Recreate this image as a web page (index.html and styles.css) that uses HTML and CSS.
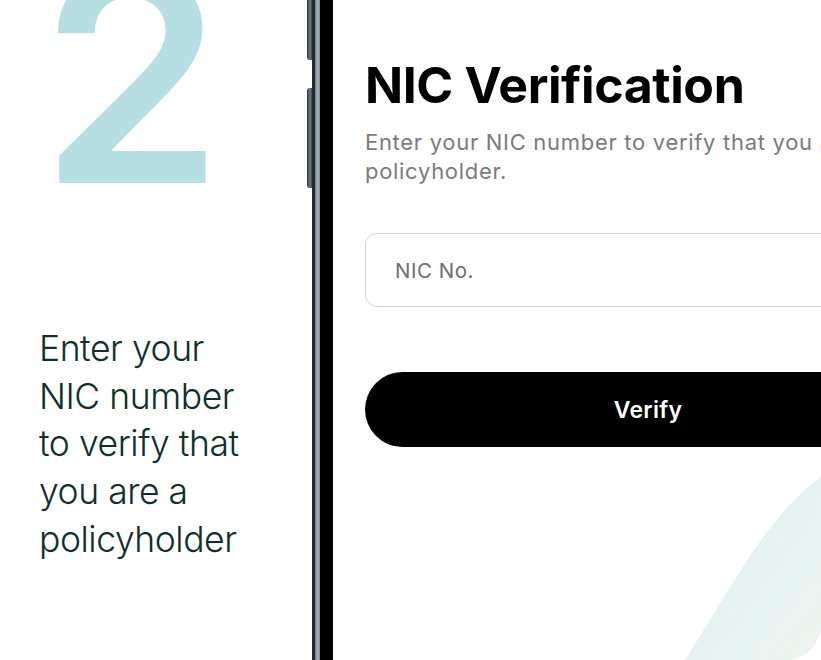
FILE: index.html
```html
<!DOCTYPE html>
<html lang="en">

<head>
    <meta charset="UTF-8">
    <meta name="viewport" content="width=device-width, initial-scale=1.0">
    <title>NIC Verification</title>
    <link rel="stylesheet" href="styles.css">
</head>

<body>
    <section class="intro">
        <div class="step-number">2</div>
        <p class="step-text">Enter your<br>NIC number<br>to verify that<br>you are a<br>policyholder</p>
    </section>

    <section class="phone">
        <div class="side-keys">
            <span class="key key-top"></span>
            <span class="key key-volume"></span>
        </div>
        <div class="bezel-outer"></div>
        <div class="bezel-rim"></div>
        <div class="bezel-inner"></div>

        <div class="screen">
            <h1>NIC Verification</h1>
            <p class="subtitle">Enter your NIC number to verify that you are a policyholder.</p>
            <form id="nicForm">
                <input type="text" id="nicInput" name="nic" placeholder="NIC No.">
                <button type="submit">Verify</button>
            </form>

            <svg class="wave" width="140" height="190" viewBox="0 0 140 190">
                <defs>
                    <linearGradient id="waveFill" x1="0" y1="0" x2="1" y2="1">
                        <stop offset="0" stop-color="#dcf0f4" />
                        <stop offset="1" stop-color="#eef4ef" />
                    </linearGradient>
                    <pattern id="waveLines" width="6" height="6" patternUnits="userSpaceOnUse" patternTransform="rotate(30)">
                        <line x1="0" y1="0" x2="0" y2="6" stroke="#ffffff" stroke-opacity="0.25" stroke-width="1" />
                    </pattern>
                </defs>
                <path d="M0 185 C 45 115, 85 35, 139 0 L 139 130 C 139 165, 125 185, 100 185 Z" fill="url(#waveFill)" />
                <path d="M0 185 C 45 115, 85 35, 139 0 L 139 130 C 139 165, 125 185, 100 185 Z" fill="url(#waveLines)" />
            </svg>
        </div>
    </section>
</body>

</html>
```

FILE: styles.css
```css
body {
    margin: 0;
    width: 821px;
    height: 660px;
    overflow: hidden;
    display: flex;
    background: #ffffff;
    font-family: Inter, "Noto Sans", sans-serif;
}

.intro {
    width: 307px;
    flex: none;
    padding-left: 39px;
    box-sizing: border-box;
}

.step-number {
    font-size: 294px;
    font-weight: 600;
    line-height: 200px;
    height: 200px;
    margin-top: -24px;
    margin-left: 1px;
    letter-spacing: -4px;
    color: #b7dfe3;
}

.step-text {
    margin: 149px 0 0;
    font-size: 35.5px;
    font-weight: 300;
    line-height: 47.7px;
    letter-spacing: -0.45px;
    color: #0f2e2c;
}

.phone {
    display: flex;
    flex: none;
    height: 660px;
}

.side-keys {
    width: 5px;
    display: flex;
    flex-direction: column;
    gap: 28px;
}

.key {
    display: block;
    background: linear-gradient(90deg, #2c3439, #6f7c86 60%, #3a434a);
    border-radius: 3px 0 0 3px;
}

.key-top {
    height: 70px;
    margin-top: -10px;
}

.key-volume {
    height: 100px;
}

.bezel-outer {
    width: 3px;
    background: #232a2e;
}

.bezel-rim {
    width: 5px;
    background: linear-gradient(90deg, #6d7a84, #a4b1ba 50%, #7d8a93);
}

.bezel-inner {
    width: 13px;
    background: #000000;
}

.screen {
    position: relative;
    width: 566px;
    flex: none;
    padding: 0 32px;
    background: #ffffff;
}

h1 {
    margin: 55px 0 0;
    font-size: 50px;
    font-weight: 700;
    line-height: 60px;
    letter-spacing: -0.4px;
    color: #000000;
}

.subtitle {
    margin: 13px 0 0;
    font-size: 22px;
    line-height: 29px;
    letter-spacing: 0.7px;
    color: #7b7b7b;
}

form {
    display: flex;
    flex-direction: column;
    gap: 65px;
    margin-top: 47px;
}

input[type="text"] {
    height: 74px;
    padding: 0 29px;
    border: 1.5px solid #d2d2d2;
    border-radius: 12px;
    box-sizing: border-box;
    font-family: inherit;
    font-size: 20.5px;
    letter-spacing: 0.5px;
    color: #222222;
}

input::placeholder {
    color: #6e6e6e;
}

button {
    height: 75px;
    border: none;
    border-radius: 38px;
    background: #000000;
    color: #ffffff;
    font-family: inherit;
    font-size: 23px;
    font-weight: 600;
    letter-spacing: 0.3px;
    cursor: pointer;
}

.wave {
    position: absolute;
    left: 352px;
    top: 475px;
}
```
